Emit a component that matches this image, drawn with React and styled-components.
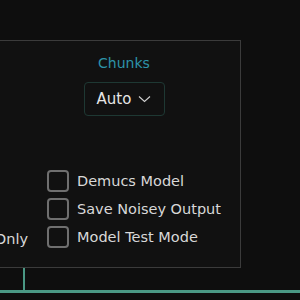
import React from "react";
import styled, { createGlobalStyle } from "styled-components";

const Global = createGlobalStyle`
  html, body { margin: 0; padding: 0; background: #0e0e0e; }
  body { width: 300px; height: 300px; overflow: hidden; font-family: "DejaVu Sans", "Liberation Sans", sans-serif; }
`;

const Page = styled.div`
  width: 300px;
  height: 300px;
  display: flex;
  flex-direction: column;
  padding-top: 40px;
  box-sizing: border-box;
  background: #0e0e0e;
  overflow: hidden;
`;

const Panel = styled.div`
  margin-left: -200px;
  width: 441px;
  height: 228px;
  box-sizing: border-box;
  border: 1px solid #3b3b3b;
  background: #111111;
  display: flex;
  flex-shrink: 0;
`;

const LeftCol = styled.div`
  width: 245px;
  padding-right: 18px;
  box-sizing: border-box;
  display: flex;
  flex-direction: column;
  justify-content: flex-end;
  align-items: flex-end;
  padding-bottom: 17px;
`;

const RightCol = styled.div`
  flex: 1;
  display: flex;
  flex-direction: column;
  padding-left: 1px;
`;

const Section = styled.div`
  width: 154px;
  display: flex;
  flex-direction: column;
  align-items: center;
  padding-top: 12px;
  gap: 9px;
`;

const Title = styled.div`
  color: #2d93a8;
  font-size: 14px;
  line-height: 20px;
`;

const Select = styled.div`
  width: 81px;
  height: 34px;
  box-sizing: border-box;
  border: 1.5px solid #1e3833;
  border-radius: 4px;
  display: flex;
  align-items: center;
  justify-content: center;
  gap: 7px;
  color: #e6e6e6;
  font-size: 15px;
`;

const Checks = styled.div`
  display: flex;
  flex-direction: column;
  gap: 6px;
  margin-top: 54px;
`;

const Row = styled.div`
  display: flex;
  align-items: center;
  gap: 8px;
  height: 22px;
`;

const Box = styled.div`
  width: 22px;
  height: 22px;
  box-sizing: border-box;
  border: 2px solid #6f6f6f;
  border-radius: 4px;
`;

const Label = styled.span`
  color: #d8d8d8;
  font-size: 14.5px;
  line-height: 22px;
  white-space: nowrap;
`;

const Connector = styled.div`
  margin-left: 23px;
  width: 2px;
  height: 22px;
  background: #4a9884;
  flex-shrink: 0;
`;

const Rail = styled.div`
  height: 3px;
  width: 100%;
  background: #4a9884;
  flex-shrink: 0;
`;

const Chevron = () => (
  <svg width="13" height="8" viewBox="0 0 13 8" fill="none">
    <path d="M1 1.5 L6.5 6.5 L12 1.5" stroke="#d0d0d0" strokeWidth="1.1" />
  </svg>
);

const options = ["Demucs Model", "Save Noisey Output", "Model Test Mode"];

export default function App() {
  return (
    <>
      <Global />
      <Page>
        <Panel>
          <LeftCol>
            <Label>Vocals Only</Label>
          </LeftCol>
          <RightCol>
            <Section>
              <Title>Chunks</Title>
              <Select>
                <span>Auto</span>
                <Chevron />
              </Select>
            </Section>
            <Checks>
              {options.map((o) => (
                <Row key={o}>
                  <Box />
                  <Label>{o}</Label>
                </Row>
              ))}
            </Checks>
          </RightCol>
        </Panel>
        <Connector />
        <Rail />
      </Page>
    </>
  );
}
